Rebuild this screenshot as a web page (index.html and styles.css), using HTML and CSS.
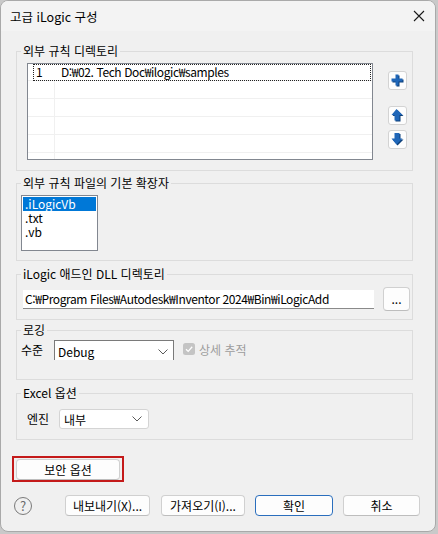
FILE: index.html
```html
<!DOCTYPE html>
<html lang="ko">

<head>
    <meta charset="UTF-8">
    <meta name="viewport" content="width=device-width, initial-scale=1.0">
    <title>고급 iLogic 구성</title>
    <link rel="stylesheet" href="styles.css">
</head>

<body>
    <div class="window">
        <div class="titlebar">
            <span class="title">고급 iLogic 구성</span>
            <svg class="close" width="12" height="12" viewBox="0 0 12 12">
                <path d="M1 1 L11 11 M11 1 L1 11" stroke="#1a1a1a" stroke-width="1.1" fill="none" />
            </svg>
        </div>

        <div class="content">
            <!-- 외부 규칙 디렉토리 -->
            <fieldset class="group g-rules">
                <legend>외부 규칙 디렉토리</legend>
                <div class="rules-row">
                    <div class="listview">
                        <div class="lv-row focus">
                            <span class="c1">1</span>
                            <span class="c2 path">D:₩02. Tech Doc₩ilogic₩samples</span>
                        </div>
                        <div class="lv-row"><span class="c1"></span><span class="c2"></span></div>
                        <div class="lv-row"><span class="c1"></span><span class="c2"></span></div>
                        <div class="lv-row"><span class="c1"></span><span class="c2"></span></div>
                        <div class="lv-row"><span class="c1"></span><span class="c2"></span></div>
                        <div class="lv-row last"><span class="c1"></span><span class="c2"></span></div>
                    </div>
                    <div class="side-buttons">
                        <div class="icon-btn add">
                            <svg width="13" height="13" viewBox="0 0 13 13">
                                <path d="M5.5 1.5h3v4h4v3h-4v4h-3v-4h-4v-3h4z" fill="#0d3f78" />
                                <path d="M4.5 0.5h3v4h4v3h-4v4h-3v-4h-4v-3h4z" fill="#1f66b8" />
                            </svg>
                        </div>
                        <div class="icon-btn up">
                            <svg width="13" height="13" viewBox="0 0 13 13">
                                <path d="M6.5 1 L12.5 7 H9.5 V12.5 H4.5 V7 H1.5 Z" fill="#0d3f78" />
                                <path d="M5.5 0 L11.5 6 H8.5 V11.5 H3.5 V6 H0.5 Z" fill="#1f66b8" />
                            </svg>
                        </div>
                        <div class="icon-btn down">
                            <svg width="13" height="13" viewBox="0 0 13 13">
                                <path d="M6.5 12.5 L12.5 6.5 H9.5 V1 H4.5 V6.5 H1.5 Z" fill="#0d3f78" />
                                <path d="M5.5 11.5 L11.5 5.5 H8.5 V0 H3.5 V5.5 H0.5 Z" fill="#1f66b8" />
                            </svg>
                        </div>
                    </div>
                </div>
            </fieldset>

            <!-- 기본 확장자 -->
            <fieldset class="group g-ext">
                <legend>외부 규칙 파일의 기본 확장자</legend>
                <div class="listbox">
                    <div class="lb-item selected">.iLogicVb</div>
                    <div class="lb-item">.txt</div>
                    <div class="lb-item">.vb</div>
                </div>
            </fieldset>

            <!-- 애드인 DLL -->
            <fieldset class="group g-dll">
                <legend>iLogic 애드인 DLL 디렉토리</legend>
                <div class="dll-row">
                    <div class="textfield path">C:₩Program Files₩Autodesk₩Inventor 2024₩Bin₩iLogicAdd</div>
                    <div class="btn browse">...</div>
                </div>
            </fieldset>

            <!-- 로깅 -->
            <fieldset class="group g-log">
                <legend>로깅</legend>
                <div class="log-row">
                    <span class="label">수준</span>
                    <div class="combo classic">
                        <span>Debug</span>
                        <svg width="10" height="6" viewBox="0 0 10 6">
                            <path d="M0.5 0.5 L5 5 L9.5 0.5" stroke="#5a5a5a" fill="none" />
                        </svg>
                    </div>
                    <div class="check disabled">
                        <svg width="12" height="12" viewBox="0 0 12 12">
                            <rect x="0" y="0" width="12" height="12" rx="2.5" fill="#c4c4c4" />
                            <path d="M3 6.2 L5.2 8.4 L9.2 3.8" stroke="#fff" stroke-width="1.3" fill="none" />
                        </svg>
                        <span>상세 추적</span>
                    </div>
                </div>
            </fieldset>

            <!-- Excel 옵션 -->
            <fieldset class="group g-excel">
                <legend>Excel 옵션</legend>
                <div class="excel-row">
                    <span class="label">엔진</span>
                    <div class="combo modern">
                        <span>내부</span>
                        <svg width="10" height="6" viewBox="0 0 10 6">
                            <path d="M0.5 0.5 L5 5 L9.5 0.5" stroke="#5a5a5a" fill="none" />
                        </svg>
                    </div>
                </div>
            </fieldset>

            <div class="security">
                <div class="btn">보안 옵션</div>
            </div>

            <div class="footer">
                <span class="help">?</span>
                <div class="btn export">내보내기(X)...</div>
                <div class="btn import">가져오기(I)...</div>
                <div class="btn ok">확인</div>
                <div class="btn cancel">취소</div>
            </div>
        </div>
    </div>
</body>

</html>
```

FILE: styles.css
```css
html,
body {
    margin: 0;
    height: 100%;
}

body {
    background: #c9c9c9;
    font-family: "Noto Sans CJK KR", sans-serif;
    font-size: 12px;
    color: #000;
}

.window {
    width: 434px;
    height: 530px;
    border: 1px solid #a9a9a9;
    border-radius: 8px;
    background: #f0f0f0;
    overflow: hidden;
}

.titlebar {
    height: 30px;
    background: #f3f3f3;
    display: flex;
    align-items: center;
    justify-content: space-between;
    padding: 0 9px 0 9px;
}

.title {
    font-size: 12.5px;
}

.close {
    margin-right: 1px;
}

.content {
    padding: 12px 21px 0 15px;
}

/* long paths run a little tighter */
.path {
    letter-spacing: -0.4px;
}

/* group boxes */
.group {
    margin: 0;
    border: 1px solid #dcdcdc;
    padding: 0 0 0 4px;
    width: 397px;
    box-sizing: border-box;
}

.group legend {
    padding: 0 2px;
    line-height: 16px;
}

.g-rules {
    padding-top: 4px;
    padding-bottom: 10px;
    margin-bottom: 4px;
}

.g-ext {
    padding-top: 4px;
    padding-bottom: 9px;
    margin-bottom: 5px;
}

.g-dll {
    padding-top: 5px;
    padding-bottom: 8px;
    margin-bottom: 2px;
}

.g-log {
    padding-top: 2px;
    padding-bottom: 19px;
    margin-bottom: 5px;
}

.g-excel {
    padding-top: 8px;
    padding-bottom: 10px;
}

/* rules list */
.rules-row {
    display: flex;
    margin-left: 6px;
}

.listview {
    width: 346px;
    height: 97px;
    flex-shrink: 0;
    box-sizing: border-box;
    border: 1px solid #828790;
    background: #fff;
    overflow: hidden;
}

.lv-row {
    display: grid;
    grid-template-columns: 27px 1fr;
    height: 17px;
    border-bottom: 1px solid #f0f0f0;
    line-height: 16px;
}

.lv-row .c1 {
    border-right: 1px solid #f0f0f0;
}

.lv-row.focus {
    position: relative;
    height: 16px;
}

.lv-row.focus::before {
    content: "";
    position: absolute;
    left: 5px;
    right: 1px;
    top: 0;
    bottom: -1px;
    border: 1px dotted #222;
}

.lv-row.focus .c1 {
    border-right: 0;
    padding-left: 8px;
}

.lv-row.focus .c2 {
    padding-left: 6px;
}

.side-buttons {
    display: flex;
    flex-direction: column;
    margin-left: 15px;
    padding-top: 8px;
}

.icon-btn {
    width: 19px;
    height: 19px;
    box-sizing: border-box;
    border: 1px solid #d3d3d3;
    border-radius: 3px;
    background: #fdfdfd;
    display: flex;
    align-items: center;
    justify-content: center;
}

.icon-btn.up {
    margin-top: 16px;
}

.icon-btn.down {
    margin-top: 5px;
}

/* extension list */
.listbox {
    width: 77px;
    height: 56px;
    box-sizing: border-box;
    border: 1px solid #828790;
    background: #fff;
    padding: 1px 1px 0 1px;
}

.lb-item {
    height: 14px;
    line-height: 14px;
    padding-left: 2px;
}

.lb-item.selected {
    background: #0078d7;
    color: #fff;
}

/* dll path */
.dll-row {
    display: flex;
    align-items: center;
    margin-left: 2px;
    height: 24px;
}

.textfield {
    width: 351px;
    height: 19px;
    flex-shrink: 0;
    box-sizing: border-box;
    background: #fff;
    border-bottom: 1px solid #8a8a8a;
    padding-left: 2px;
    line-height: 18px;
    white-space: nowrap;
}

.btn {
    box-sizing: border-box;
    border: 1px solid #d0d0d0;
    border-bottom-color: #bdbdbd;
    border-radius: 4px;
    background: #fdfdfd;
    display: flex;
    align-items: center;
    justify-content: center;
    flex-shrink: 0;
}

.browse {
    width: 27px;
    height: 24px;
    margin-left: 9px;
    padding-bottom: 2px;
}

/* logging */
.log-row {
    display: flex;
    align-items: flex-start;
    height: 20px;
}

.label {
    line-height: 20px;
    flex-shrink: 0;
}

.g-log .label {
    width: 33px;
}

.g-excel .label {
    width: 32px;
}

.combo {
    box-sizing: border-box;
    background: #fff;
    display: flex;
    align-items: center;
    justify-content: space-between;
    height: 20px;
    flex-shrink: 0;
}

.combo.classic {
    width: 120px;
    border: 1px solid #7a7a7a;
    border-bottom: 0;
    padding: 2px 5px 0 3px;
}

.combo.modern {
    width: 90px;
    border: 1px solid #d4d4d4;
    border-radius: 3px;
    padding: 0 6px 0 4px;
}

.check {
    display: flex;
    align-items: center;
    margin-left: 9px;
    margin-top: 3px;
    height: 12px;
}

.check.disabled span {
    color: #9d9d9d;
    margin-left: 4px;
}

/* excel */
.excel-row {
    display: flex;
    margin-left: 6px;
}

/* buttons below the groups */
.security {
    width: 112px;
    height: 26px;
    box-sizing: border-box;
    margin: 16px 0 0 -4px;
    border: 2px solid #c41a1a;
    padding: 1px 2px 0 2px;
}

.security .btn {
    height: 21px;
}

.footer {
    display: flex;
    align-items: center;
    margin: 13px 0 0 -2px;
    height: 21px;
}

.help {
    width: 18px;
    height: 18px;
    flex-shrink: 0;
    box-sizing: border-box;
    border: 1px solid #7a7a7a;
    border-radius: 50%;
    color: #6a6a6a;
    font-size: 13px;
    line-height: 16px;
    text-align: center;
}

.footer .btn {
    height: 21px;
}

.export {
    width: 85px;
    margin-left: 33px;
}

.import {
    width: 84px;
    margin-left: 11px;
}

.ok {
    width: 78px;
    margin-left: 10px;
    border: 1px solid #2a6ebd;
}

.cancel {
    width: 77px;
    margin-left: 10px;
}
```
